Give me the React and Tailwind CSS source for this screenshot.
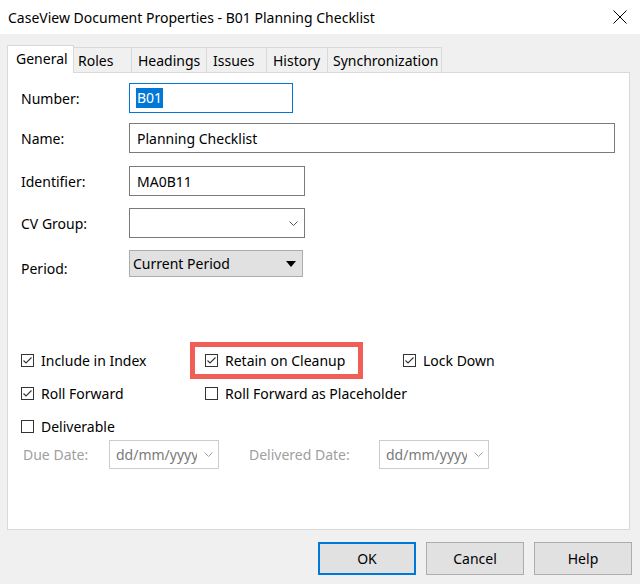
import React from "react";

const tabs = [
  { label: "General", w: "w-[67px]", pad: "pl-[8px]", active: true },
  { label: "Roles", w: "w-[58px]", pad: "pl-[4px]" },
  { label: "Headings", w: "w-[75px]", pad: "pl-[6px]" },
  { label: "Issues", w: "w-[60px]", pad: "pl-[6px]" },
  { label: "History", w: "w-[61px]", pad: "pl-[6px]" },
  { label: "Synchronization", w: "w-[114px]", pad: "pl-[5px]" },
];

const CheckBox = ({ checked, label }) => (
  <div className="flex items-center h-[20px] whitespace-nowrap">
    <span className="w-[13px] h-[13px] border border-[#333333] bg-white flex items-center justify-center shrink-0">
      {checked && (
        <svg width="11" height="11" viewBox="0 0 11 11">
          <path d="M1.5 5.5 L4 8 L9.5 2.5" fill="none" stroke="#333333" strokeWidth="1.1" />
        </svg>
      )}
    </span>
    <span className="ml-[7px] text-black">{label}</span>
  </div>
);

const Chevron = ({ color }) => (
  <svg width="9" height="5" viewBox="0 0 9 5">
    <path d="M0.5 0.5 L4.5 4.5 L8.5 0.5" fill="none" stroke={color} strokeWidth="1" />
  </svg>
);

const FieldRow = ({ label, mt, labelPad = "", children }) => (
  <div className={`flex items-center ${mt}`}>
    <span className={`w-[108px] text-black ${labelPad}`}>{label}</span>
    {children}
  </div>
);

const DateBox = () => (
  <div className="w-[110px] h-[29px] border border-[#cccccc] flex items-center pl-[6px] pr-[5px]">
    <span className="w-[81px] overflow-hidden whitespace-nowrap text-[#7a7a7a]">dd/mm/yyyy</span>
    <span className="ml-auto">
      <Chevron color="#a0a0a0" />
    </span>
  </div>
);

const DocumentProperties = () => {
  return (
    <div className="w-[640px] h-[584px] bg-[#f0f0f0] flex flex-col text-[14px] font-['Noto_Sans','Open_Sans',sans-serif]">
      {/* title bar */}
      <div className="h-[34px] bg-white flex items-center justify-between pl-[8px] pr-[13px] shrink-0">
        <span className="text-black">CaseView Document Properties - B01 Planning Checklist</span>
        <svg width="14" height="14" viewBox="0 0 14 14">
          <path d="M0.5 0.5 L13.5 13.5 M13.5 0.5 L0.5 13.5" stroke="#000" strokeWidth="1" />
        </svg>
      </div>

      <div className="flex flex-col pl-[7px] pr-[10px] pt-[11px]">
        {/* tabs */}
        <div className="flex items-end h-[28px] -mb-px relative z-10">
          {tabs.map((t) =>
            t.active ? (
              <div
                key={t.label}
                className={`${t.w} ${t.pad} h-[28px] bg-white border-l border-t border-r border-[#d9d9d9] flex items-center pb-[2px]`}
              >
                {t.label}
              </div>
            ) : (
              <div
                key={t.label}
                className={`${t.w} ${t.pad} h-[26px] bg-[#f0f0f0] border-t border-r border-b border-[#d9d9d9] flex items-center`}
              >
                {t.label}
              </div>
            )
          )}
        </div>

        {/* panel */}
        <div className="h-[458px] bg-white border border-[#d9d9d9] pl-[13px] flex flex-col">
          <FieldRow label="Number:" mt="mt-[10px]">
            <div className="w-[164px] h-[30px] border border-[#0078d7] flex items-center pl-[6px]">
              <span className="bg-[#0078d7] text-white leading-[20px] px-px">B01</span>
            </div>
          </FieldRow>
          <FieldRow label="Name:" mt="mt-[10px]">
            <div className="w-[486px] h-[30px] border border-[#7a7a7a] flex items-center pl-[7px]">
              Planning Checklist
            </div>
          </FieldRow>
          <FieldRow label="Identifier:" mt="mt-[13px]">
            <div className="w-[176px] h-[30px] border border-[#7a7a7a] flex items-center pl-[7px]">
              MA0B11
            </div>
          </FieldRow>
          <FieldRow label="CV Group:" mt="mt-[12px]">
            <div className="w-[176px] h-[30px] border border-[#7a7a7a] flex items-center justify-end pr-[6px]">
              <Chevron color="#555555" />
            </div>
          </FieldRow>
          <FieldRow label="Period:" mt="mt-[10px]" labelPad="pt-[10px]">
            <div className="w-[174px] h-[27px] bg-[#e1e1e1] border border-[#adadad] flex items-center pl-[3px] pr-[6px]">
              <span>Current Period</span>
              <svg className="ml-auto" width="10" height="6" viewBox="0 0 10 6">
                <path d="M0 0 L10 0 L5 6 Z" fill="#000" />
              </svg>
            </div>
          </FieldRow>

          {/* checkboxes */}
          <div className="grid grid-cols-[184px_198px_1fr] mt-[71px] gap-y-[13px]">
            <CheckBox checked label="Include in Index" />
            <div className="relative">
              <CheckBox checked label="Retain on Cleanup" />
              <div className="absolute left-[-15px] top-[-8px] w-[173px] h-[37px] border-[5px] border-[#ef5f55]" />
            </div>
            <CheckBox checked label="Lock Down" />
            <CheckBox checked label="Roll Forward" />
            <CheckBox label="Roll Forward as Placeholder" />
            <div />
            <CheckBox label="Deliverable" />
          </div>

          <div className="flex items-center mt-[4px] pl-[2px]">
            <span className="w-[86px] text-[#a0a0a0]">Due Date:</span>
            <DateBox />
            <span className="ml-[30px] w-[130px] text-[#a0a0a0]">Delivered Date:</span>
            <DateBox />
          </div>
        </div>

        {/* buttons */}
        <div className="flex justify-end gap-[10px] mt-[12px] -mr-[2px]">
          <button className="w-[98px] h-[33px] bg-[#e1e1e1] border-2 border-[#0078d7] text-black">OK</button>
          <button className="w-[98px] h-[33px] bg-[#e1e1e1] border border-[#adadad] text-black">Cancel</button>
          <button className="w-[98px] h-[33px] bg-[#e1e1e1] border border-[#adadad] text-black">Help</button>
        </div>
      </div>
    </div>
  );
};

export default function App() {
  return <DocumentProperties />;
}
